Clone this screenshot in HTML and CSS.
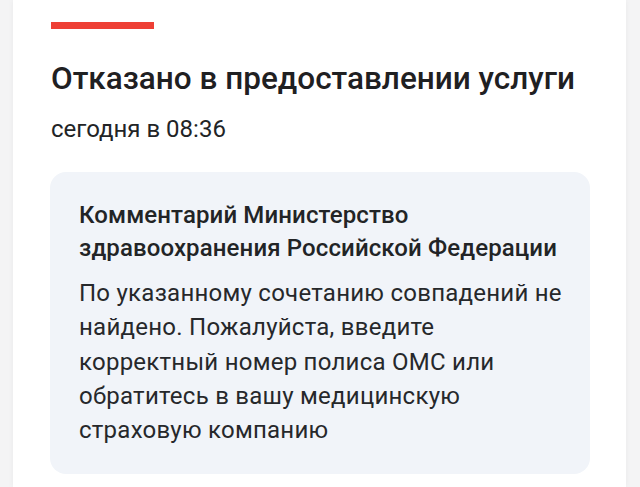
FILE: index.html
```html
<!DOCTYPE html>
<html lang="ru">
<head>
<meta charset="utf-8">
<link rel="stylesheet" href="styles.css">
</head>
<body>
<div class="card">
  <div class="accent"></div>
  <h1 class="title">Отказано в предоставлении услуги</h1>
  <div class="date">сегодня в 08:36</div>
  <div class="comment">
    <div class="comment-head">Комментарий Министерство здравоохранения Российской Федерации</div>
    <div class="comment-body">По указанному сочетанию совпадений не найдено. Пожалуйста, введите корректный номер полиса ОМС или обратитесь в вашу медицинскую страховую компанию</div>
  </div>
</div>
</body>
</html>
```

FILE: styles.css
```css
html, body {
  margin: 0;
  padding: 0;
  height: 100%;
  background: #f4f4f5;
  font-family: Roboto, "Liberation Sans", sans-serif;
  color: #222426;
}
body {
  overflow: hidden;
}
.card {
  margin: 0 14px 0 13px;
  min-height: 100%;
  background: #ffffff;
  box-shadow: 0 0 6px rgba(0, 0, 0, 0.05);
  padding: 22px 36px 0 37px;
  box-sizing: border-box;
}
.accent {
  width: 103px;
  height: 7px;
  margin-left: 1px;
  background: #ee3f35;
}
.title {
  margin: 31px 0 0 1px;
  font-size: 31.5px;
  line-height: 38px;
  font-weight: 500;
  color: #1f2022;
}
.date {
  margin: 16px 0 0 1px;
  font-size: 24px;
  line-height: 30px;
  color: #222426;
}
.comment {
  margin-top: 28px;
  background: #f1f4f9;
  border-radius: 16px;
  padding: 27px 20px 27px 29px;
}
.comment-head {
  font-size: 24px;
  line-height: 33px;
  font-weight: 500;
  letter-spacing: 0.12px;
  color: #222426;
}
.comment-body {
  margin-top: 11px;
  font-size: 24px;
  line-height: 34.25px;
  letter-spacing: 0.25px;
  color: #26282b;
}
```
